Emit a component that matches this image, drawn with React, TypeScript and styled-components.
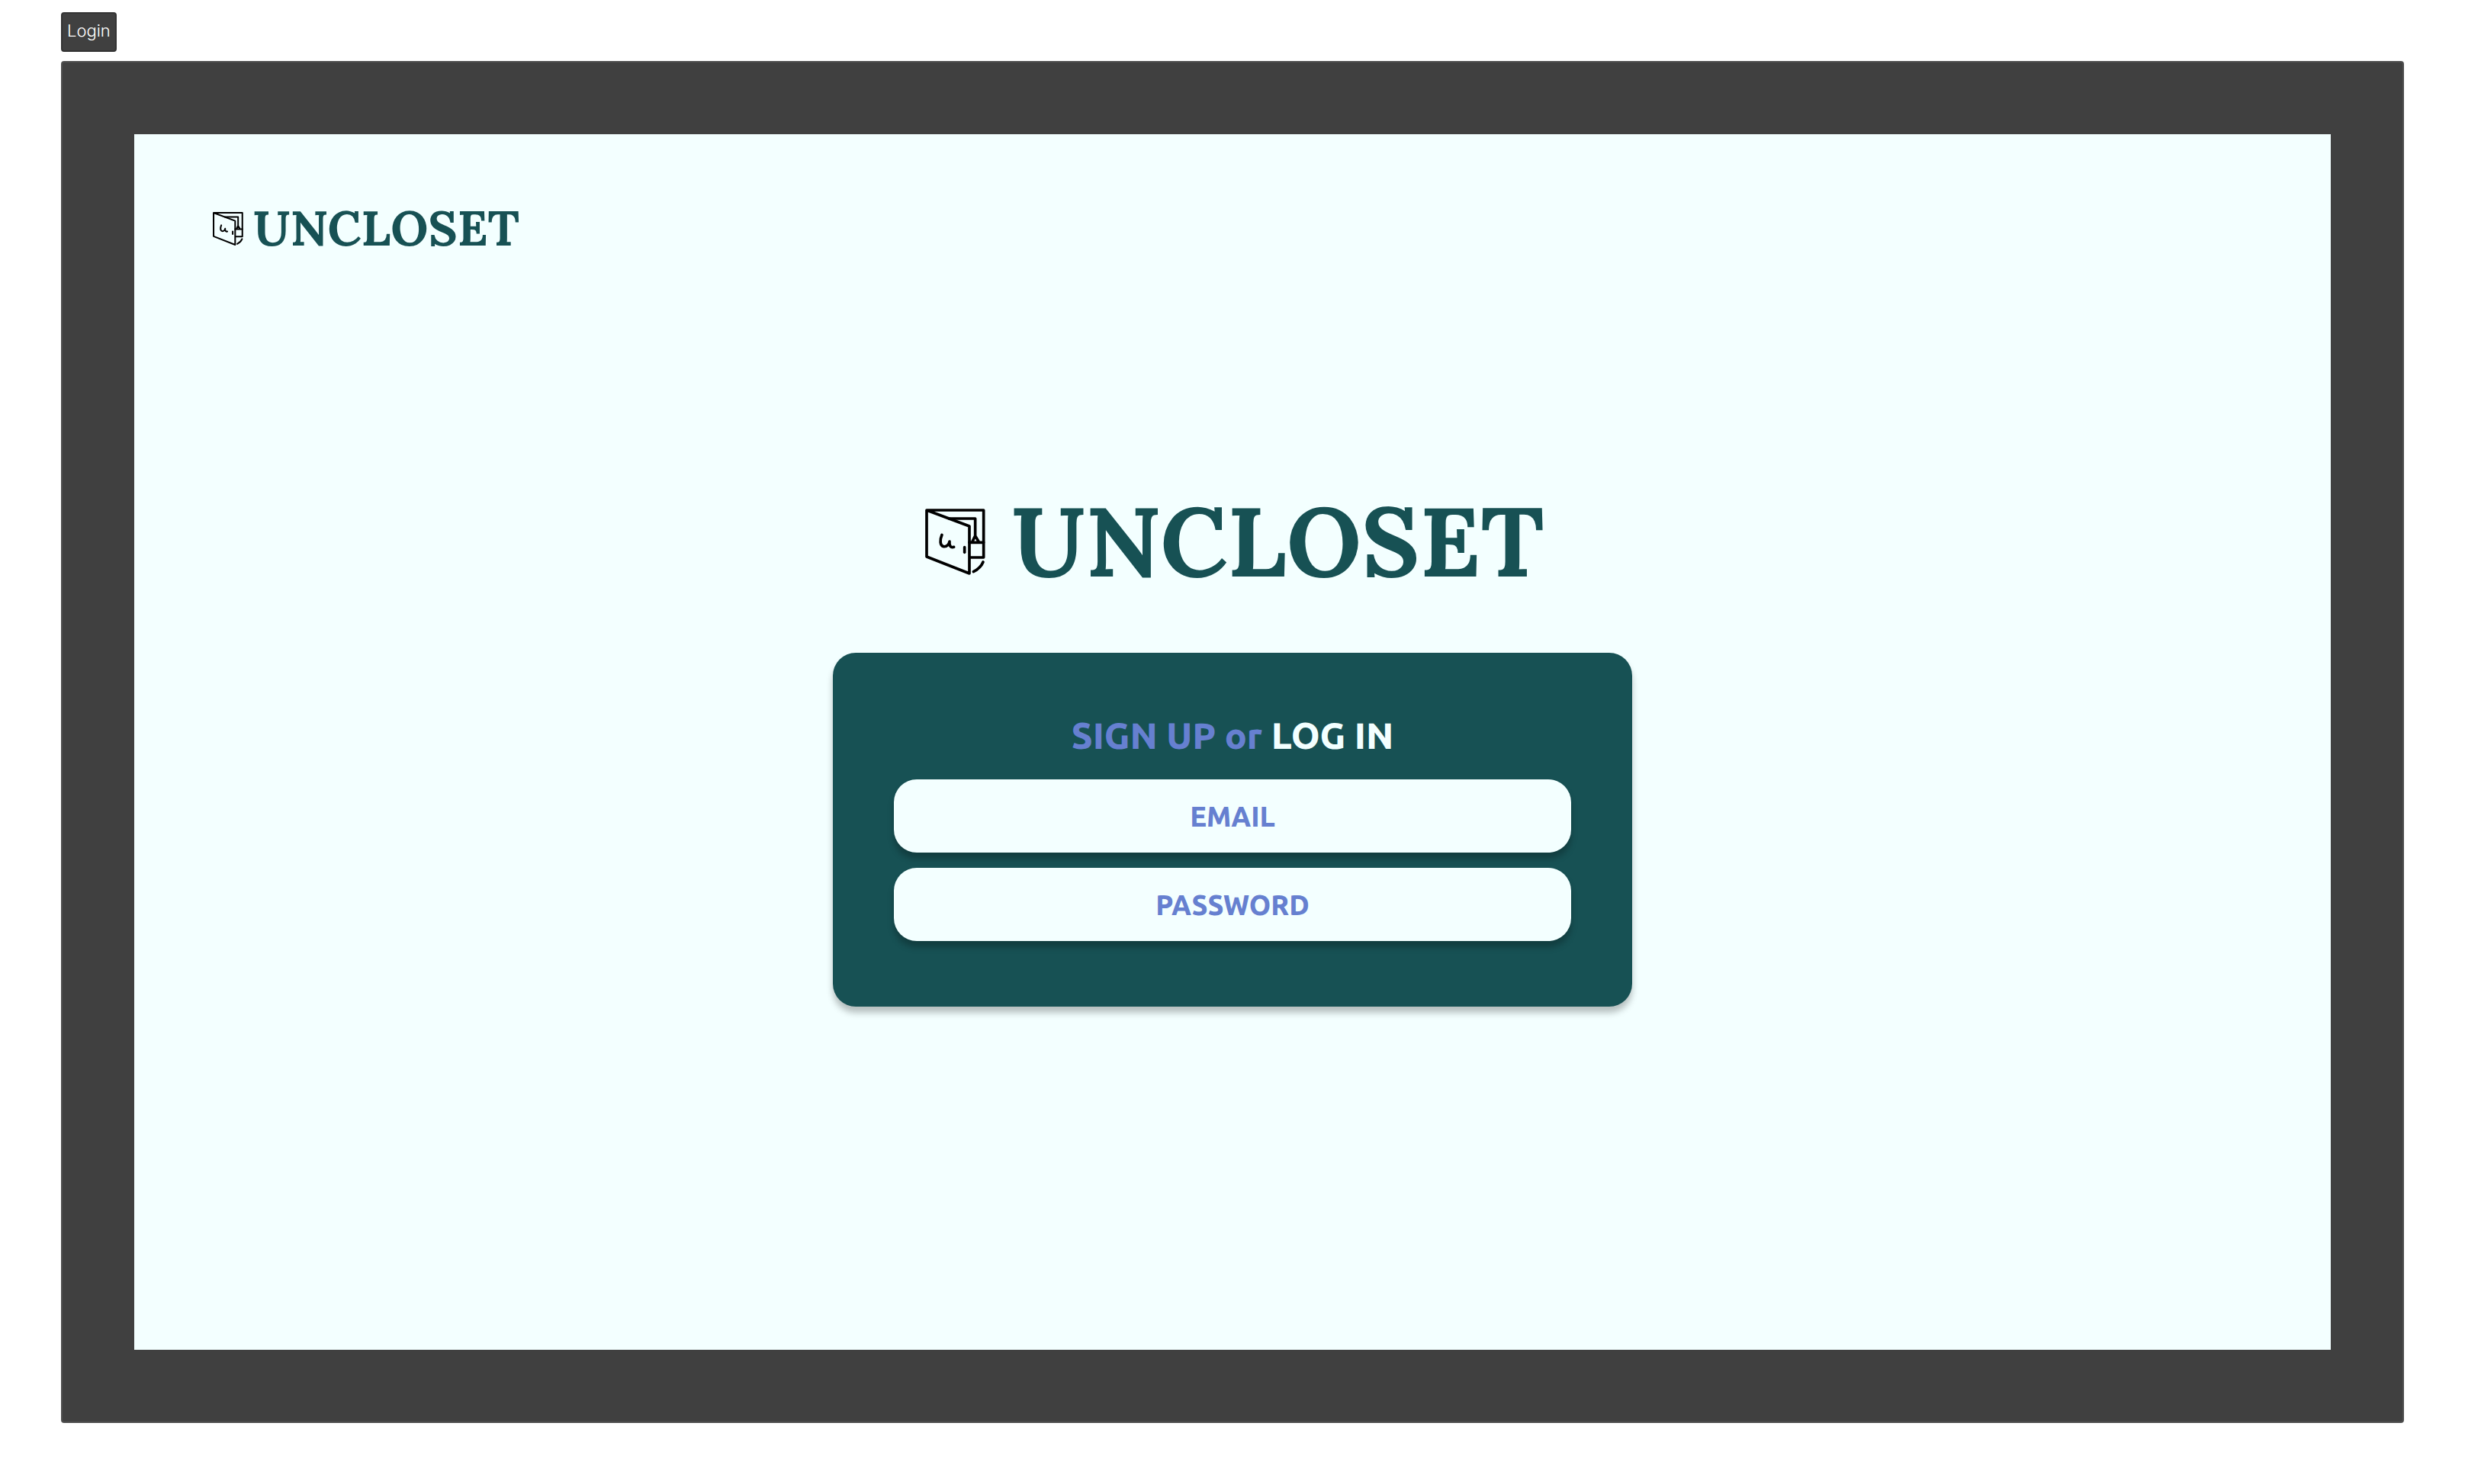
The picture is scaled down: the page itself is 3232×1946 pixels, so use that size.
import React from "react";
import styled, { createGlobalStyle } from "styled-components";

const colors = {
  frame: "#404040",
  mint: "#f3ffff",
  teal: "#175154",
  periwinkle: "#6680d0",
};

const GlobalStyle = createGlobalStyle`
  *, *::before, *::after { box-sizing: border-box; }
  body { margin: 0; background: #ffffff; }
`;

const Page = styled.div`
  display: flex;
  flex-direction: column;
  align-items: stretch;
  gap: 12px;
  min-height: 100vh;
  padding: 16px 80px 80px;
`;

const Tag = styled.div`
  align-self: flex-start;
  padding: 8px 6px 12px;
  border: 2px solid #333333;
  border-radius: 4px;
  background: ${colors.frame};
  color: #ffffff;
  font: 300 22px/28px Inter, sans-serif;
`;

const Frame = styled.div`
  display: flex;
  flex: 1;
  padding: 94px;
  border: 2px solid #4f4f4f;
  border-radius: 4px;
  background: ${colors.frame};
`;

const Screen = styled.div`
  display: flex;
  flex: 1;
  flex-direction: column;
  background: ${colors.mint};
`;

const Header = styled.header`
  padding: 91px 100px 0;
`;

const Main = styled.main`
  display: flex;
  flex: 1;
  flex-direction: column;
  align-items: center;
  justify-content: center;
  gap: 83px;
  padding-bottom: 136px;
`;

const Brand = styled.div<{ $large?: boolean }>`
  display: flex;
  align-items: center;
  gap: ${(p) => (p.$large ? 20 : 6)}px;
  color: ${colors.teal};
  font-family: Lora, "Liberation Serif", serif;
  font-size: ${(p) => (p.$large ? 128 : 64)}px;
  font-weight: 700;
  line-height: 1;
`;

const BrandIcon = styled.svg<{ $large?: boolean }>`
  flex: none;
  width: ${(p) => (p.$large ? 99 : 50)}px;
  height: ${(p) => (p.$large ? 89 : 45)}px;
  fill: none;
  stroke: #000000;
  stroke-width: ${(p) => (p.$large ? 11 : 12)};
  stroke-linecap: round;
  stroke-linejoin: round;
`;

const BrandName = styled.span``;

const Card = styled.form`
  display: flex;
  flex-direction: column;
  gap: 20px;
  width: 1048px;
  max-width: 100%;
  padding: 80px 80px 86px;
  border-radius: 30px;
  background: ${colors.teal};
  box-shadow: 0 8px 8px rgba(0, 0, 0, 0.25);
  font-family: Ubuntu, "Open Sans", sans-serif;
`;

const Choices = styled.div`
  margin-bottom: 10px;
  color: ${colors.periwinkle};
  font-size: 48px;
  font-weight: 800;
  line-height: 56px;
  text-align: center;
`;

const Choice = styled.button<{ $active?: boolean }>`
  padding: 0;
  border: 0;
  background: none;
  color: ${(p) => (p.$active ? colors.mint : "inherit")};
  font: inherit;
  cursor: pointer;
`;

const Field = styled.input`
  width: 100%;
  height: 96px;
  padding: 0 30px;
  border: 0;
  border-radius: 30px;
  outline: none;
  background: ${colors.mint};
  box-shadow: 0 8px 8px rgba(0, 0, 0, 0.25);
  color: ${colors.periwinkle};
  font-family: inherit;
  font-size: 36px;
  font-weight: 800;
  text-align: center;

  &::placeholder {
    color: ${colors.periwinkle};
    opacity: 1;
  }
`;

function Logo({ large }: { large?: boolean }) {
  return (
    <Brand $large={large}>
      <BrandIcon $large={large} viewBox="53 77 297 267" aria-hidden="true">
        <path d="M77 89H301V275H245M77 89L245 152V338L77 272Z" />
        <path d="M165 122H268V190M245 216H301M257 212L268 190L281 212" />
        <path d="M226 235V255" />
        <path d="M299 293Q289 317 261 331" />
        <path d="M137 186C129 205 128 229 144 232C157 234 166 221 167 212C165 229 172 238 184 234" />
      </BrandIcon>
      <BrandName>UNCLOSET</BrandName>
    </Brand>
  );
}

export default function App() {
  return (
    <Page>
      <GlobalStyle />
      <Tag>Login</Tag>
      <Frame>
        <Screen>
          <Header>
            <Logo />
          </Header>
          <Main>
            <Logo large />
            <Card onSubmit={(e: React.FormEvent) => e.preventDefault()}>
              <Choices>
                <Choice type="button">SIGN UP</Choice> or{" "}
                <Choice type="submit" $active>
                  LOG IN
                </Choice>
              </Choices>
              <Field type="email" placeholder="EMAIL" aria-label="EMAIL" />
              <Field type="password" placeholder="PASSWORD" aria-label="PASSWORD" />
            </Card>
          </Main>
        </Screen>
      </Frame>
    </Page>
  );
}
